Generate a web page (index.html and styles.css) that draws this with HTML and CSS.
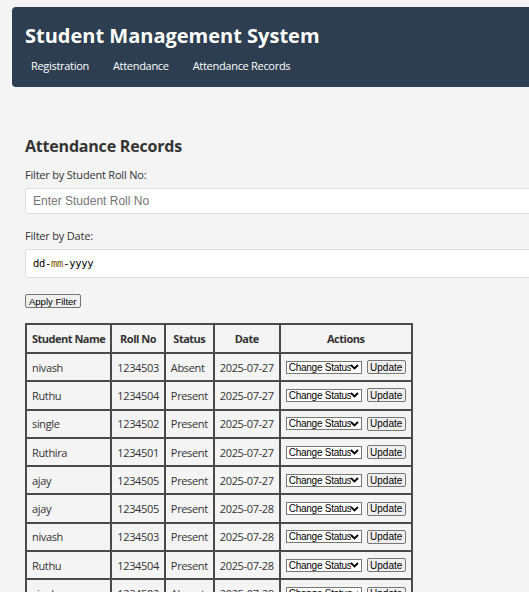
FILE: index.html
```html
<!DOCTYPE html>
<html>
<head>
	<meta charset="UTF-8">
	<meta name="viewport" content="width=device-width, initial-scale=1">
	<title>Student Management System</title>
	<link rel="stylesheet" href="styles.css">
</head>
<body>
	<div class="page">
		<header class="topbar">
			<h1 class="title">Student Management System</h1>
			<nav class="nav">
				<a href="#">Registration</a>
				<a href="#">Attendance</a>
				<a href="#">Attendance Records</a>
			</nav>
		</header>

		<section class="records">
			<h2>Attendance Records</h2>
			<label for="roll">Filter by Student Roll No:</label>
			<input type="text" id="roll" class="field" placeholder="Enter Student Roll No">
			<label for="date">Filter by Date:</label>
			<div id="date" class="field date-field">dd-<span class="mm">mm</span>-yyyy</div>
			<button class="apply-btn">Apply Filter</button>

			<table class="att-table">
				<thead>
					<tr>
						<th>Student Name</th>
						<th>Roll No</th>
						<th>Status</th>
						<th>Date</th>
						<th>Actions</th>
					</tr>
				</thead>
				<tbody id="rows"></tbody>
			</table>
		</section>
	</div>
<script>
var records = [
	["nivash", "1234503", "Absent", "2025-07-27"],
	["Ruthu", "1234504", "Present", "2025-07-27"],
	["single", "1234502", "Present", "2025-07-27"],
	["Ruthira", "1234501", "Present", "2025-07-27"],
	["ajay", "1234505", "Present", "2025-07-27"],
	["ajay", "1234505", "Present", "2025-07-28"],
	["nivash", "1234503", "Present", "2025-07-28"],
	["Ruthu", "1234504", "Present", "2025-07-28"],
	["single", "1234502", "Absent", "2025-07-28"]
];

var html = "";
for (var i = 0; i < records.length; i++) {
	var r = records[i];
	html += "<tr><td>" + r[0] + "</td><td>" + r[1] + "</td><td>" + r[2] + "</td><td>" + r[3] + "</td>" +
		"<td><div class=\"acts\"><select class=\"status-sel\"><option>Change Status</option><option>Present</option><option>Absent</option></select>" +
		"<button class=\"upd-btn\">Update</button></div></td></tr>";
}
document.getElementById("rows").innerHTML = html;
</script>
</body>
</html>
```

FILE: styles.css
```css
* {
	box-sizing: border-box;
}
html, body {
	overflow: hidden;
}
body {
	margin: 0;
	padding: 0;
	background-color: #f4f4f4;
	font-family: "Open Sans", "Noto Sans", sans-serif;
	color: #333;
}
.page {
	width: 640px;
	padding: 7px 12px;
}
.topbar {
	background-color: #2c3e50;
	color: white;
	border-radius: 4px;
	padding: 16px 13px 13px;
	height: 80px;
}
.title {
	margin: 0;
	font-size: 20px;
	font-weight: bold;
	line-height: 26px;
}
.nav {
	display: flex;
	gap: 24px;
	margin-top: 9px;
	padding-left: 6px;
}
.nav a {
	color: white;
	text-decoration: none;
	font-size: 11px;
	letter-spacing: -0.3px;
}
.records {
	padding: 48px 13px 0;
}
.records h2 {
	margin: 0 0 10px;
	font-size: 16px;
	line-height: 22px;
	letter-spacing: -0.2px;
}
label {
	display: block;
	font-size: 11px;
	letter-spacing: -0.2px;
	margin-bottom: 6px;
}
.field {
	display: block;
	width: 100%;
	height: 26px;
	margin-bottom: 14px;
	padding: 0 7px;
	border: 1px solid #ddd;
	border-radius: 3px;
	background-color: white;
	font-family: "Liberation Sans", Arial, sans-serif;
	font-size: 12px;
	color: #333;
}
.field::placeholder {
	color: #757575;
}
.date-field {
	height: 29px;
	line-height: 27px;
	font-family: "DejaVu Sans Mono", monospace;
	font-size: 10.5px;
	letter-spacing: -0.3px;
	color: #000;
	margin-bottom: 16px;
}
.date-field .mm {
	color: #7a5a00;
}
.apply-btn {
	display: block;
	font-family: "Liberation Sans", Arial, sans-serif;
	font-size: 9.5px;
	height: 14px;
	line-height: 11px;
	padding: 0 3px;
	border: 1px solid #767676;
	border-radius: 2px;
	background-color: #efefef;
	color: #000;
	margin-bottom: 15px;
}
.att-table {
	border-collapse: collapse;
	border: 2px solid #4a4a4a;
	font-size: 11px;
	letter-spacing: -0.35px;
}
.att-table th, .att-table td {
	border: 2px solid #4a4a4a;
	padding: 0 5px;
	height: 28.3px;
	white-space: nowrap;
}
.att-table th {
	font-weight: bold;
	text-align: center;
	height: 29px;
	letter-spacing: -0.5px;
}
.att-table td {
	text-align: left;
}
.acts {
	display: flex;
	align-items: center;
	gap: 5px;
}
.status-sel {
	appearance: none;
	-webkit-appearance: none;
	font-family: "Liberation Sans", Arial, sans-serif;
	font-size: 10px;
	letter-spacing: -0.25px;
	height: 13px;
	line-height: 11px;
	padding: 0 10px 0 2px;
	border: 1px solid #767676;
	border-radius: 0;
	background-color: white;
	background-image: url("data:image/svg+xml,%3Csvg xmlns='http://www.w3.org/2000/svg' width='9' height='6' viewBox='0 0 9 6'%3E%3Cpath d='M1 1l3.5 3.5L8 1' fill='none' stroke='black' stroke-width='1.8'/%3E%3C/svg%3E");
	background-repeat: no-repeat;
	background-position: right 2px center;
	color: #000;
	width: 76px;
}
.upd-btn {
	display: flex;
	align-items: center;
	justify-content: center;
	font-family: "Liberation Sans", Arial, sans-serif;
	font-size: 10px;
	letter-spacing: 0;
	height: 14px;
	width: 39px;
	padding: 0;
	border: 1px solid #767676;
	border-radius: 2px;
	background-color: #efefef;
	color: #000;
}
```
